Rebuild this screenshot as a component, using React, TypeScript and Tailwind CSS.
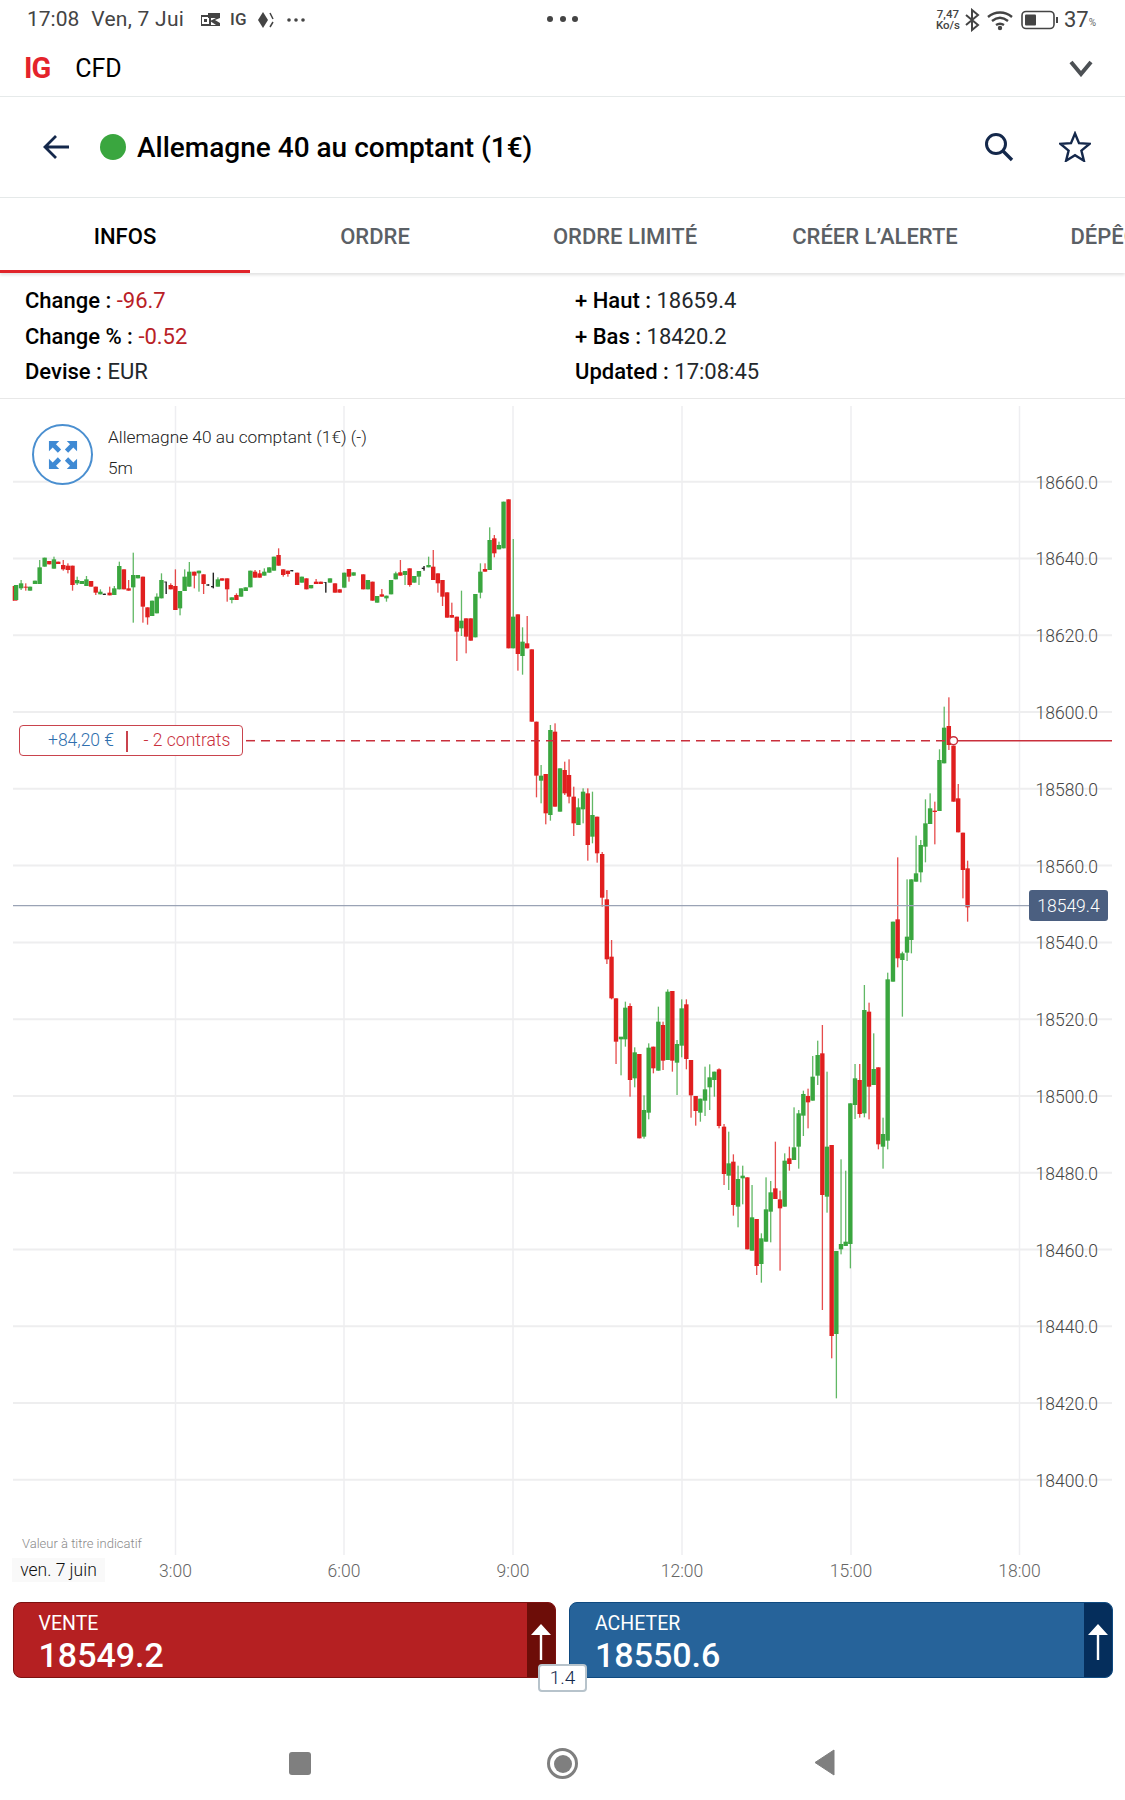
import React from 'react'

type Candle = [number, string, number, number, number?, number?]

const RED = '#e01f1f'
const GREEN = '#3aa63f'
const BLACK = '#222222'

// x, colour, body top, body bottom, wick top, wick bottom (read off the crops)
const morning: Candle[] = [
  [37, 'r', 168, 212], [45, 'g', 165, 210], [59, 'g', 160, 175, 150, 180], [72, 'r', 170, 173, 160, 182],
  [84, 'g', 170, 182], [98, 'g', 152, 162], [111, 'g', 112, 162, 90, 162], [125, 'g', 83, 110],
  [138, 'r', 93, 103], [151, 'g', 88, 116, 80, 116], [163, 'r', 95, 102], [177, 'r', 105, 118, 90, 122],
  [190, 'r', 107, 120, 100, 130], [203, 'r', 107, 165, 107, 182], [216, 'g', 150, 160, 140, 165],
  [229, 'g', 153, 162], [242, 'g', 148, 168, 138, 168], [255, 'r', 153, 170], [268, 'r', 170, 188, 170, 195],
  [281, 'g', 185, 193, 178, 193], [294, 'k', 191, 195], [307, 'r', 188, 196, 170, 196],
  [320, 'g', 175, 195, 168, 195], [334, 'g', 108, 178, 95, 178], [347, 'r', 118, 178], [360, 'r', 175, 182, 150, 182],
  [373, 'g', 135, 172, 68, 278], [386, 'g', 135, 145], [400, 'r', 140, 230, 140, 278], [413, 'r', 232, 262, 232, 284],
  [426, 'g', 212, 258], [439, 'g', 200, 250, 190, 250], [452, 'g', 150, 205, 130, 205], [465, 'k', 155, 157, 155, 192],
  [478, 'r', 165, 178, 160, 178], [491, 'r', 168, 240, 118, 240], [504, 'g', 183, 235, 183, 256],
  [517, 'g', 140, 183, 118, 183], [530, 'g', 125, 170, 96, 170], [544, 'r', 125, 137, 125, 175],
  [557, 'g', 122, 130, 122, 185], [570, 'r', 133, 162, 133, 192], [584, 'k', 163, 167], [597, 'k', 168, 172, 128, 175],
  [610, 'g', 148, 170, 142, 170], [622, 'r', 145, 152], [636, 'r', 145, 178, 145, 215], [649, 'g', 202, 210, 202, 220],
  [662, 'r', 195, 210, 190, 210], [675, 'g', 175, 200], [688, 'g', 172, 183], [701, 'g', 122, 172],
  [714, 'r', 125, 143, 120, 143], [727, 'r', 130, 143, 120, 143], [740, 'g', 125, 137, 115, 137], [754, 'g', 112, 128],
  [767, 'g', 80, 122], [780, 'r', 75, 107, 55, 107], [793, 'r', 118, 135, 118, 140], [806, 'r', 122, 132, 122, 140],
  [819, 'k', 120, 124], [832, 'r', 128, 165], [845, 'g', 140, 158], [858, 'r', 145, 178], [871, 'g', 165, 175],
  [885, 'r', 155, 162, 147, 162], [898, 'r', 155, 162], [912, 'k', 156, 158, 156, 188], [924, 'g', 145, 158],
  [938, 'r', 160, 188], [951, 'r', 178, 188], [964, 'g', 128, 173], [977, 'r', 117, 140, 117, 155], [990, 'g', 127, 137],
  [1017, 'r', 133, 178], [1030, 'g', 150, 178], [1043, 'r', 155, 212], [1056, 'g', 198, 218], [1069, 'r', 193, 200, 177, 200],
  [1082, 'g', 197, 205, 197, 215], [1095, 'g', 150, 193], [1108, 'g', 130, 148, 125, 148], [1121, 'r', 127, 137, 90, 137],
  [1134, 'g', 123, 135, 123, 165], [1147, 'r', 115, 165, 115, 170], [1160, 'g', 138, 158], [1173, 'g', 123, 140, 123, 165],
  [1187, 'k', 113, 117, 108, 122], [1200, 'g', 105, 112, 80, 112], [1213, 'r', 110, 150, 60, 150], [1226, 'r', 130, 160, 130, 188],
  [1239, 'r', 150, 200, 150, 228], [1252, 'r', 187, 263], [1265, 'r', 255, 263, 218, 263], [1279, 'r', 260, 305, 260, 393],
  [1292, 'g', 272, 295, 182, 318], [1305, 'r', 265, 320, 265, 370], [1318, 'r', 265, 332], [1331, 'g', 192, 322],
  [1345, 'g', 125, 188, 100, 205], [1358, 'r', 117, 125, 100, 125], [1371, 'g', 30, 120, -8, 120], [1384, 'r', 25, 70, 15, 82],
  [1397, 'g', 45, 58, 35, 58], [1410, 'g', -85, 55], [1437, 'g', 260, 355, 27, 355], [1424, 'r', -92, 355],
  [1450, 'r', 253, 372, 253, 422], [1463, 'g', 335, 378, 292, 434], [1476, 'r', 340, 355, 258, 355], [1489, 'r', 358, 575],
  [1502, 'r', 575, 737, 575, 802], [1515, 'g', 737, 752, 705, 820], [1528, 'r', 732, 850, 732, 883],
  [1541, 'g', 600, 855, 585, 872], [1554, 'r', 605, 830, 580, 830],
]

const midday: Candle[] = [
  [0, 'g', 265, 395], [13, 'r', 270, 340, 245, 345], [25, 'r', 285, 350, 238, 370], [38, 'r', 350, 430, 320, 468],
  [51, 'g', 382, 435, 355, 435], [64, 'g', 335, 388, 325, 430], [77, 'r', 340, 495, 325, 542], [90, 'g', 405, 470, 335, 490],
  [103, 'r', 410, 520, 410, 548], [117, 'r', 522, 653, 516, 680], [130, 'r', 658, 838, 630, 852], [143, 'r', 830, 955, 780, 958],
]

const dip: Candle[] = [
  [408, 'r', 85, 215, 85, 282], [423, 'g', 200, 208, 205, 316], [436, 'g', 113, 208, 95, 230], [450, 'r', 108, 330, 100, 380],
  [464, 'g', 247, 325, 232, 352], [478, 'r', 252, 505], [492, 'g', 420, 500, 376, 506], [506, 'g', 233, 428, 220, 448],
  [520, 'r', 230, 295, 230, 310], [535, 'g', 155, 302, 110, 302], [549, 'r', 165, 272, 155, 300], [563, 'g', 65, 270, 58, 270],
  [577, 'r', 63, 272, 63, 305], [591, 'g', 222, 278, 210, 375], [605, 'g', 115, 227, 88, 262], [619, 'r', 103, 267, 88, 298],
  [633, 'r', 270, 376, 270, 443], [647, 'r', 378, 423, 378, 467], [661, 'g', 386, 428, 386, 455], [675, 'g', 358, 392, 290, 438],
  [689, 'g', 322, 352, 283, 420], [703, 'g', 305, 330, 305, 380], [717, 'r', 298, 468, 295, 475], [732, 'r', 470, 612, 462, 645],
  [746, 'g', 580, 617, 485, 660], [760, 'r', 575, 705, 553, 737], [774, 'g', 627, 710, 587, 772], [788, 'g', 617, 625, 587, 703],
  [802, 'r', 622, 838], [816, 'g', 742, 842, 645, 842], [830, 'r', 747, 888, 747, 915], [844, 'g', 805, 882, 790, 938],
  [858, 'g', 718, 815, 622, 815], [872, 'g', 667, 725, 633, 817], [886, 'r', 655, 687, 515, 687], [900, 'r', 688, 715, 662, 902],
  [914, 'g', 572, 710, 550, 710], [928, 'r', 565, 582, 530, 602], [942, 'g', 532, 570, 412, 570], [956, 'g', 430, 530, 420, 596],
  [970, 'g', 372, 437, 362, 498], [984, 'r', 378, 397, 356, 475], [998, 'g', 320, 392, 258, 392], [1013, 'g', 255, 317, 212, 345],
  [1027, 'r', 250, 675, 165, 1020], [1041, 'g', 530, 680, 305, 728], [1055, 'r', 525, 1098, 525, 1165], [1069, 'g', 843, 1092, 843, 1285],
  [1083, 'g', 822, 838, 568, 853], [1097, 'g', 815, 828, 602, 828], [1111, 'g', 400, 822, 400, 895], [1125, 'g', 325, 405, 282, 447],
  [1139, 'r', 330, 432, 282, 443], [1153, 'g', 120, 430, 45, 442], [1167, 'r', 125, 350, 98, 448], [1181, 'g', 297, 345, 190, 345],
  [1195, 'r', 292, 523, 292, 538], [1209, 'g', 492, 530, 443, 596], [1223, 'g', 28, 512, 8, 538],
]

const close: Candle[] = [
  [924, 'g', 725, 905], [950, 'g', 820, 840, 815, 1010], [937, 'r', 718, 835, 532, 862], [963, 'g', 770, 818, 598, 843],
  [975, 'g', 598, 780, 598, 820], [988, 'g', 580, 605, 467, 605], [1001, 'g', 495, 577, 480, 607], [1014, 'g', 430, 500, 358, 547],
  [1027, 'g', 385, 432, 340, 432], [1040, 'r', 392, 396, 365, 493], [1053, 'g', 240, 393, 208, 393], [1066, 'g', 143, 250, 80, 250],
  [1079, 'r', 138, 195, 52, 210], [1092, 'r', 197, 365], [1105, 'r', 355, 457, 312, 457], [1118, 'r', 458, 570, 458, 655],
  [1131, 'r', 565, 682, 542, 725],
]

const place = (list: Candle[], x0: number, kx: number, y0: number) =>
  list.map(([x, c, t, b, hi, lo]) => ({
    x: x0 + x / kx,
    color: c === 'r' ? RED : c === 'g' ? GREEN : BLACK,
    dark: c === 'k',
    top: y0 + t / 3,
    bottom: y0 + b / 3,
    high: y0 + (hi ?? t) / 3,
    low: y0 + (lo ?? b) / 3,
  }))

const candles = [
  ...place(morning, 0, 2.8, 530),
  ...place(midday, 560, 2.775, 680),
  ...place(dip, 480, 3, 970),
  ...place(close, 560, 2.775, 680),
]

const prices = ['18660.0', '18640.0', '18620.0', '18600.0', '18580.0', '18560.0', '18540.0', '18520.0', '18500.0', '18480.0', '18460.0', '18440.0', '18420.0', '18400.0']
const times = [
  { label: '3:00', x: 175.5 },
  { label: '6:00', x: 344 },
  { label: '9:00', x: 513 },
  { label: '12:00', x: 682 },
  { label: '15:00', x: 851 },
  { label: '18:00', x: 1019.5 },
]
const tabs = ['INFOS', 'ORDRE', 'ORDRE LIMITÉ', 'CRÉER L’ALERTE', 'DÉPÊCHES']

const StatusBar = () => (
  <div className="relative flex h-[38px] items-center justify-between pl-[27px] pr-[29px] pt-[1px] text-[#444]">
    <div className="flex items-center">
      <span className="text-[21px]">17:08</span>
      <span className="ml-[12px] text-[21px] tracking-[0.25px]">Ven, 7 Jui</span>
      <svg width="20" height="16" viewBox="0 0 20 16" className="ml-[17px]">
        <rect x="0" y="4" width="9" height="9" fill="none" stroke="#444" strokeWidth="2" />
        <rect x="3" y="7" width="3" height="3" fill="#444" />
        <path d="M7 1h12v5l-5 2 5 3v3H9l-1-1h7l-6-4 6-3H7z" fill="#444" />
      </svg>
      <span className="ml-[9px] text-[17px] font-medium">IG</span>
      <svg width="18" height="18" viewBox="0 0 18 18" className="ml-[11px]">
        <path d="M6 1l5 8-5 8-5-8z" fill="#444" />
        <path d="M13 2l3 6M16 11l-3 5" stroke="#444" strokeWidth="1.5" fill="none" />
      </svg>
      <svg width="20" height="6" viewBox="0 0 20 6" className="ml-[11px]">
        <circle cx="3" cy="3" r="1.8" fill="#444" />
        <circle cx="10" cy="3" r="1.8" fill="#444" />
        <circle cx="17" cy="3" r="1.8" fill="#444" />
      </svg>
    </div>
    <div className="absolute left-[547px] top-[16px] flex gap-[6.5px]">
      <span className="h-[6px] w-[6px] rounded-full bg-[#444]" />
      <span className="h-[6px] w-[6px] rounded-full bg-[#444]" />
      <span className="h-[6px] w-[6px] rounded-full bg-[#444]" />
    </div>
    <div className="flex items-center">
      <div className="flex flex-col items-center text-[11.5px] font-medium leading-[11px]">
        <span>7,47</span>
        <span>Ko/s</span>
      </div>
      <svg width="16" height="24" viewBox="0 0 16 24" className="ml-[4px]">
        <path d="M2 7l12 10-6 5V2l6 5L2 17" fill="none" stroke="#444" strokeWidth="2" />
      </svg>
      <svg width="26" height="22" viewBox="0 0 26 22" className="ml-[7px]">
        <path d="M1 8c7-6 17-6 24 0M5 12c5-4 11-4 16 0M9 16c3-2 5-2 8 0" fill="none" stroke="#444" strokeWidth="2.4" />
        <circle cx="13" cy="19" r="2.2" fill="#444" />
      </svg>
      <svg width="38" height="20" viewBox="0 0 38 20" className="ml-[8px]">
        <rect x="1" y="1.5" width="32" height="17" rx="4" fill="none" stroke="#444" strokeWidth="1.6" />
        <rect x="4" y="4.5" width="11" height="11" rx="1" fill="#444" />
        <rect x="35" y="7" width="2" height="6" fill="#444" />
      </svg>
      <span className="ml-[5px] text-[22px] leading-none">37</span>
      <span className="mt-[5px] text-[10px] text-[#666]">%</span>
    </div>
  </div>
)

const AppBar = () => (
  <div className="flex h-[59px] items-center justify-between border-b border-[#e6eaea] pl-[24px] pr-[32px] pt-[3px]">
    <div className="flex items-center">
      <span className="text-[29px] font-bold leading-none tracking-[-1px] text-[#e4232b]">IG</span>
      <span className="ml-[25px] text-[25px] font-normal text-black">CFD</span>
    </div>
    <svg width="24" height="17" viewBox="0 0 24 17">
      <path d="M2 2l10 12L22 2" fill="none" stroke="#4c5054" strokeWidth="4" />
    </svg>
  </div>
)

const Header = () => (
  <div className="flex h-[101px] items-center border-b border-[#e6eaea] pl-[43px] pr-[34px]">
    <svg width="27" height="26" viewBox="0 0 27 26">
      <path d="M13 2L2 13l11 11M2 13h24" fill="none" stroke="#14284b" strokeWidth="2.8" />
    </svg>
    <span className="ml-[30px] h-[26px] w-[26px] rounded-full bg-[#3aa63f]" />
    <span className="ml-[11px] pt-[2px] text-[28px] font-medium text-black">Allemagne 40 au comptant (1€)</span>
    <svg width="30" height="30" viewBox="0 0 30 30" className="ml-auto">
      <circle cx="12" cy="12" r="9.5" fill="none" stroke="#14284b" strokeWidth="3" />
      <path d="M19 19l9 9" stroke="#14284b" strokeWidth="3.4" />
    </svg>
    <svg width="32" height="31" viewBox="0 0 32 31" className="ml-[45px] mb-[2px]">
      <path d="M16 2.5l4 9.6 10.4.8-8 6.7 2.5 10.1L16 24.2l-8.900 5.500 2.500-10.100-8-6.700 10.400-.800z" fill="none" stroke="#14284b" strokeWidth="2.4" />
    </svg>
  </div>
)

const Tabs = () => (
  <div className="relative z-10 flex h-[75px] overflow-hidden shadow-[0_2px_3px_rgba(0,0,0,0.12)]">
    {tabs.map((tab, i) => (
      <div
        key={tab}
        className={
          i === 0
            ? 'flex w-[250px] shrink-0 items-center justify-center whitespace-nowrap border-b-[3px] border-[#e0242a] pt-[4px] text-[22px] font-medium text-black'
            : 'flex w-[250px] shrink-0 items-center justify-center whitespace-nowrap pt-[1px] text-[22px] font-medium text-[#5b6065]'
        }
      >
        {tab}
      </div>
    ))}
  </div>
)

const Stat = ({ label, value, red }: { label: string; value: string; red?: boolean }) => (
  <div className="h-[35.500px] whitespace-nowrap text-[22px] leading-[35.500px]">
    <span className="font-medium text-black">{label} : </span>
    <span className={red ? 'text-[#b92026]' : 'text-[#24282c]'}>{value}</span>
  </div>
)

const InfoPanel = () => (
  <div className="grid h-[126px] grid-cols-[550px_1fr] border-b border-[#e8e8e8] pl-[25px] pt-[10px]">
    <div>
      <Stat label="Change" value="-96.7" red />
      <Stat label="Change %" value="-0.52" red />
      <Stat label="Devise" value="EUR" />
    </div>
    <div>
      <Stat label="+ Haut" value="18659.4" />
      <Stat label="+ Bas" value="18420.2" />
      <Stat label="Updated" value="17:08:45" />
    </div>
  </div>
)

const ChartPlot = () => (
  <svg viewBox="0 399 1125 1203" width="1125" height="1203" className="block">
    {times.map((t) => (
      <line key={t.x} x1={t.x} x2={t.x} y1="406" y2="1555" stroke="#eeeef1" strokeWidth="1.500" />
    ))}
    {prices.map((p, i) => {
      const y = 481.7 + i * 76.78
      return (
        <g key={p}>
          <line x1="13" x2="1112" y1={y} y2={y} stroke="#eeeeef" strokeWidth="2" />
          <text x="1098" y={y + 7} textAnchor="end" fontSize="17.5" fill="#444" fontWeight="300">
            {p}
          </text>
        </g>
      )
    })}
    {candles.map((c, i) => (
      <g key={i}>
        <rect x={c.x - 0.6} y={c.high} width={c.dark ? 1.4 : 1.3} height={c.low - c.high} fill={c.color} opacity={c.dark ? 1 : 0.8} />
        <rect
          x={Math.max(c.x - 2.2, 13)}
          y={c.top}
          width={c.dark ? 2.5 : 4.4}
          height={c.bottom - c.top}
          fill={c.color}
        />
      </g>
    ))}
    <line x1="246" x2="950" y1="740.700" y2="740.700" stroke="#c9303c" strokeWidth="1.500" strokeDasharray="9 6" />
    <line x1="953" x2="1112" y1="740.700" y2="740.700" stroke="#c9303c" strokeWidth="1.500" />
    <circle cx="953.500" cy="740.700" r="4" fill="#fff" stroke="#c9303c" strokeWidth="1.500" />
    <line x1="13" x2="1030" y1="905.700" y2="905.700" stroke="#9aa3b5" strokeWidth="1.300" />
    {times.map((t) => (
      <text key={t.label} x={t.x} y="1577" textAnchor="middle" fontSize="17.5" fontWeight="300" fill="#666">
        {t.label}
      </text>
    ))}
  </svg>
)

const Chart = () => (
  <div className="relative h-[1203px] overflow-hidden">
    <ChartPlot />
    {/* expand button and instrument label sit over the plot */}
    <div className="absolute left-[32px] top-[25px] flex items-start">
      <div className="flex h-[61px] w-[61px] items-center justify-center rounded-full border-2 border-[#4a8fd0] bg-white">
        <svg width="30" height="30" viewBox="0 0 32 32" fill="#3f8ad4">
          <path d="M1 1h11L8.500 4.500l5.500 5.500-3.500 3.500L5 8l-4 4z" />
          <path d="M31 1H20l3.500 3.500L18 10l3.500 3.500L27 8l4 4z" />
          <path d="M1 31h11l-3.500-3.500 5.500-5.500-3.500-3.500L5 24l-4-4z" />
          <path d="M31 31H20l3.500-3.500L18 22l3.500-3.500L27 24l4-4z" />
        </svg>
      </div>
      <div className="ml-[15px] text-[17.300px] font-light text-[#222]">
        <div className="h-[31px] leading-[26px]">Allemagne 40 au comptant (1€) (-)</div>
        <div className="leading-[26px]">5m</div>
      </div>
    </div>
    <div className="absolute left-[19px] top-[326px] flex h-[31px] w-[224px] items-center rounded-[4px] border-[1.500px] border-[#c9434d] bg-white pt-[1px] text-[17.500px] font-light leading-none">
      <span className="ml-[28px] text-[#2f6fae]">+84,20 €</span>
      <span className="ml-[12px] h-[21px] w-[1.500px] bg-[#c9434d]" />
      <span className="ml-[16px] text-[#c9303c]">- 2 contrats</span>
    </div>
    <div className="absolute left-[1029px] top-[491px] flex h-[31px] w-[79px] items-center justify-center rounded-[3px] bg-[#4b5f80] pt-[1px] text-[17.500px] font-light text-white">
      18549.4
    </div>
    <span className="absolute left-[22px] top-[1135px] text-[13px] font-light text-[#8a8a8a]">Valeur à titre indicatif</span>
    <div className="absolute left-[12px] top-[1159px] flex h-[24px] w-[93px] items-center justify-center bg-[#f9f9f9] text-[17.500px] font-light text-[#111]">
      ven. 7 juin
    </div>
  </div>
)

const Arrow = () => (
  <svg width="22" height="38" viewBox="0 0 22 38">
    <path d="M11 1L1 12h8.800v25h2.400V12H21z" fill="#fff" />
  </svg>
)

const TradeButton = ({ label, price, body, strip, edge }: { label: string; price: string; body: string; strip: string; edge: string }) => (
  <div className={`flex h-[76px] flex-1 overflow-hidden rounded-[8px] border-[1.500px] text-white ${body} ${edge}`}>
    <div className="flex-1 pl-[25px] pt-[9px]">
      <div className="text-[19.500px] leading-[24px]">{label}</div>
      <div className="text-[34px] font-medium leading-[39px]">{price}</div>
    </div>
    <div className={`flex w-[28px] justify-center pt-[20px] ${strip}`}>
      <Arrow />
    </div>
  </div>
)

const TradeButtons = () => (
  <div className="relative flex gap-[13px] pl-[12.500px] pr-[12.500px]">
    <TradeButton label="VENTE" price="18549.2" body="bg-[#b52022]" strip="bg-[#6d0d08]" edge="border-[#7c1110]" />
    <TradeButton label="ACHETER" price="18550.6" body="bg-[#26639a]" strip="bg-[#052e5c]" edge="border-[#0f4a80]" />
    <div className="absolute left-[538px] top-[62px] flex h-[28px] w-[49px] items-center justify-center rounded-[4px] border-2 border-[#b7c3cb] bg-white text-[19px] font-light text-[#14284b]">
      1.4
    </div>
  </div>
)

const NavBar = () => (
  <div className="relative mt-[73px] h-[30px]">
    <div className="absolute left-[289px] top-[1px] h-[23px] w-[22px] rounded-[3px] bg-[#7f7f7f]" />
    <div className="absolute left-[547px] top-[-3px] flex h-[31px] w-[31px] items-center justify-center rounded-full border-[3px] border-[#7f7f7f]">
      <span className="h-[18px] w-[18px] rounded-full bg-[#7f7f7f]" />
    </div>
    <svg width="21" height="27" viewBox="0 0 21 27" className="absolute left-[814px] top-[-2px]">
      <path d="M20 1v25L1 13.500z" fill="#7f7f7f" stroke="#7f7f7f" strokeLinejoin="round" />
    </svg>
  </div>
)

export default function App() {
  return (
    <div className="h-[1800px] w-[1125px] overflow-hidden bg-white [font-family:Roboto,sans-serif]">
      <StatusBar />
      <AppBar />
      <Header />
      <Tabs />
      <InfoPanel />
      <Chart />
      <TradeButtons />
      <NavBar />
    </div>
  )
}
